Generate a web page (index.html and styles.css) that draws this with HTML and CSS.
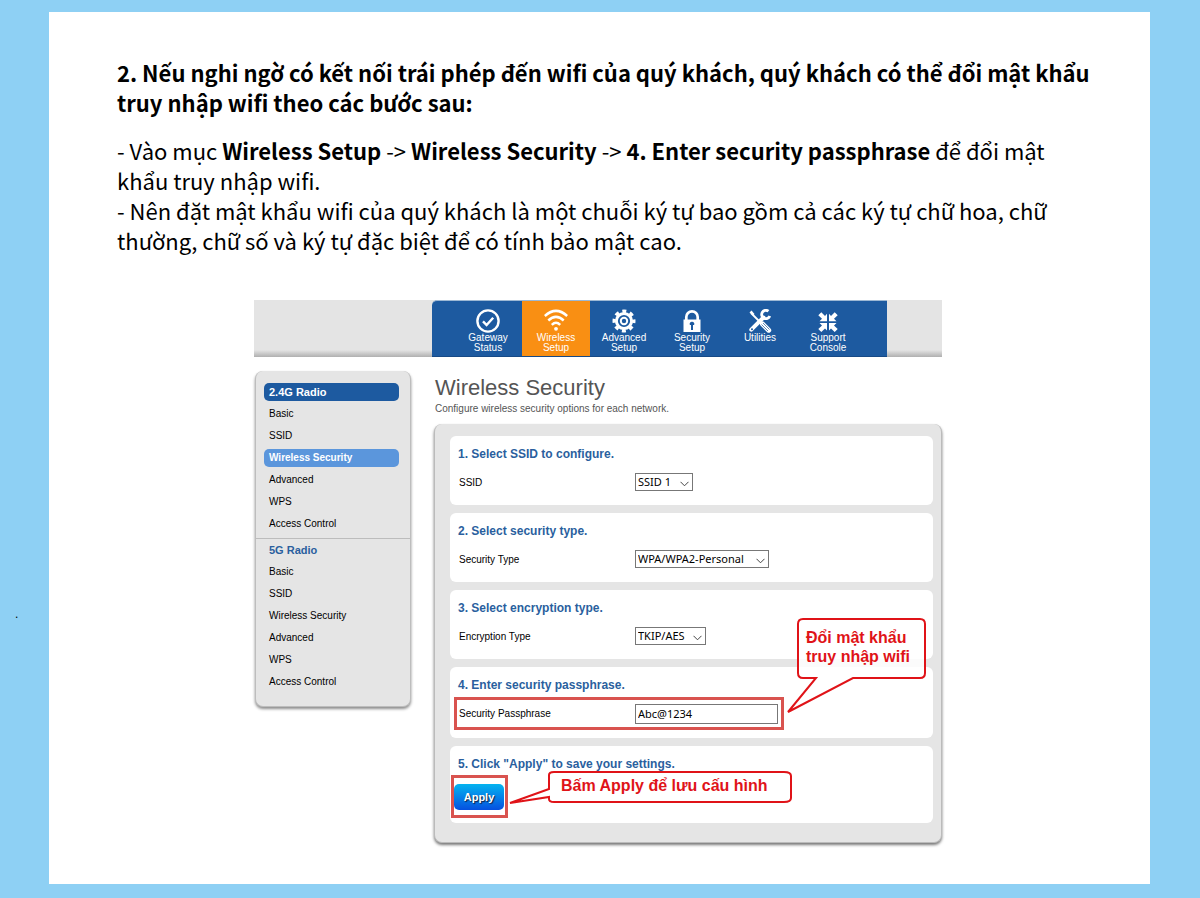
FILE: index.html
```html
<!DOCTYPE html>
<html lang="vi">
<head>
<meta charset="utf-8">
<meta name="viewport" content="width=device-width, initial-scale=1">
<title>Wireless Security</title>
<link rel="stylesheet" href="styles.css">
</head>
<body>
<span class="dot">.</span>
<main class="sheet">
  <section class="intro">
    <h1>2. Nếu nghi ngờ có kết nối trái phép đến wifi của quý khách, quý khách có thể đổi mật khẩu<br>truy nhập wifi theo các bước sau:</h1>
    <p>- Vào mục <b>Wireless Setup</b> -&gt; <b>Wireless Security</b> -&gt; <b>4. Enter security passphrase</b> để đổi mật<br>khẩu truy nhập wifi.</p>
    <p>- Nên đặt mật khẩu wifi của quý khách là một chuỗi ký tự bao gồm cả các ký tự chữ hoa, chữ<br>thường, chữ số và ký tự đặc biệt để có tính bảo mật cao.</p>
  </section>

  <section class="router">
    <header class="topbar">
      <nav class="tabs">
        <a href="#status" class="tab">
          <svg viewBox="0 0 24 24" fill="none" stroke="#fff" stroke-width="2.4"><circle cx="12" cy="12" r="10.6"/><path d="M7 12.3l3.6 3.7 6.6-7.2"/></svg>
          <span>Gateway<br>Status</span></a>
        <a href="#wireless" class="tab tab-active">
          <svg viewBox="0 0 24 24" fill="none" stroke="#fff" stroke-width="2.5"><path d="M.8 7Q12-3.200 23.200 7M4.300 11.500Q12 4.300 19.700 11.500M7.800 15.800Q12 11.800 16.200 15.800"/><circle cx="12" cy="19.800" r="1.900" fill="#fff" stroke="none"/></svg>
          <span>Wireless<br>Setup</span></a>
        <a href="#advanced" class="tab">
          <svg viewBox="0 0 24 24" fill="none" stroke="#fff"><circle cx="12" cy="12" r="7.600" stroke-width="3"/><circle cx="12" cy="12" r="3.200" stroke-width="2"/><circle cx="12" cy="12" r="9.900" stroke-width="3.200" stroke-dasharray="4 3.775" stroke-dashoffset="2"/></svg>
          <span>Advanced<br>Setup</span></a>
        <a href="#security" class="tab">
          <svg viewBox="0 0 24 24"><path d="M6.300 11V8a5.700 5.700 0 0 1 11.400 0v3" fill="none" stroke="#fff" stroke-width="2.700"/><path fill="#fff" fill-rule="evenodd" d="M3.500 10.500h17V23h-17zM12 12.800a2.200 2.200 0 0 0-2.100 3.200h1.100v5h2v-5h1.100A2.200 2.200 0 0 0 12 12.800z"/></svg>
          <span>Security<br>Setup</span></a>
        <a href="#utilities" class="tab">
          <svg viewBox="0 0 24 24" fill="none" stroke="#fff"><path d="M3 4l11 11" stroke-width="1.800"/><path d="M1.500 3.500L3.500 1.500L6.500 5L5 6.500z" fill="#fff" stroke="none"/><path d="M14.500 15l6.200 6.200" stroke-width="5" stroke-linecap="round"/><path d="M15 14l6.500 6.500M13.500 15.500l6.500 6.500" stroke="#1d5aa0" stroke-width=".7"/><path d="M3.300 20.700L15.500 8.500" stroke-width="4" stroke-linecap="round"/><path d="M20.500 2.200A4.200 4.200 0 1 0 21.800 7" stroke-width="2.800"/><circle cx="4" cy="20.200" r="1" fill="#1d5aa0" stroke="none"/></svg>
          <span>Utilities</span></a>
        <a href="#support" class="tab">
          <svg viewBox="0 0 24 24" fill="#fff"><path d="M11 12.300H3.500L6 9.800L2.300 6.200L5.300 3.200L9 6.900L11 4.800z"/><path d="M13 12.300h7.500L18 9.800l3.700-3.600-3-3L15 6.900l-2-2.100zM11 14H3.500L6 16.500l-3.700 3.600 3 3L9 19.400l2 2.100zM13 14h7.500L18 16.500l3.700 3.600-3 3L15 19.400l-2 2.100z"/></svg>
          <span>Support<br>Console</span></a>
      </nav>
    </header>

    <div class="columns">
      <aside class="sidebar">
        <h3 class="current">2.4G Radio</h3>
        <a href="#b24">Basic</a>
        <a href="#s24">SSID</a>
        <a href="#w24" class="selected">Wireless Security</a>
        <a href="#a24">Advanced</a>
        <a href="#p24">WPS</a>
        <a href="#c24">Access Control</a>
        <hr>
        <h3>5G Radio</h3>
        <a href="#b5">Basic</a>
        <a href="#s5">SSID</a>
        <a href="#w5">Wireless Security</a>
        <a href="#a5">Advanced</a>
        <a href="#p5">WPS</a>
        <a href="#c5">Access Control</a>
      </aside>

      <div class="content">
        <h2>Wireless Security</h2>
        <p class="subtitle">Configure wireless security options for each network.</p>

        <form class="panel">
          <section class="card">
            <h4>1. Select SSID to configure.</h4>
            <div class="row"><label for="ssid">SSID</label>
              <span class="select select-s"><select id="ssid"><option>SSID 1</option></select><svg viewBox="0 0 9 6"><path d="M.5.8l4 4 4-4"/></svg></span></div>
          </section>
          <section class="card">
            <h4>2. Select security type.</h4>
            <div class="row"><label for="sec">Security Type</label>
              <span class="select select-l"><select id="sec"><option>WPA/WPA2-Personal</option></select><svg viewBox="0 0 9 6"><path d="M.5.8l4 4 4-4"/></svg></span></div>
          </section>
          <section class="card">
            <h4>3. Select encryption type.</h4>
            <div class="row"><label for="enc">Encryption Type</label>
              <span class="select select-m"><select id="enc"><option>TKIP/AES</option></select><svg viewBox="0 0 9 6"><path d="M.5.8l4 4 4-4"/></svg></span></div>
          </section>
          <section class="card">
            <h4>4. Enter security passphrase.</h4>
            <div class="row marked"><label for="pass">Security Passphrase</label>
              <input id="pass" type="text" value="Abc@1234"></div>
          </section>
          <section class="card card-last">
            <h4>5. Click "Apply" to save your settings.</h4>
            <div class="apply-mark"><button type="button">Apply</button></div>
          </section>

          <div class="callout callout-pass">
            <svg viewBox="0 0 140 97"><path d="M16 2H133Q138 2 138 7V56Q138 61 133 61H66L1 95L29 61H16Q11 61 11 56V7Q11 2 16 2z"/></svg>
            <p>Đổi mật khẩu<br>truy nhập wifi</p>
          </div>
          <div class="callout callout-apply">
            <svg viewBox="0 0 284 34"><path d="M45 2H275Q282 2 282 6V28Q282 32 275 32H45Q40 32 40 29V27L1 33L40 19V5Q40 2 45 2z"/></svg>
            <p>Bấm Apply để lưu cấu hình</p>
          </div>
        </form>
      </div>
    </div>
  </section>
</main>
</body>
</html>
```
FILE: styles.css
```css
* { box-sizing: border-box; }

body {
  margin: 0;
  padding: 12px 50px 14px 49px;
  background: #8ed0f4;
  font-family: "Liberation Sans", Arial, sans-serif;
  font-size: 10px;
  color: #000;
}

h1, h2, h3, h4, p { margin: 0; }
a { color: inherit; text-decoration: none; }

.dot { position: absolute; left: 15px; top: 608px; font-size: 12px; line-height: 12px; }

.sheet { background: #fff; padding: 45px 40px 41px 68px; }

.intro {
  font-family: "Noto Sans CJK SC", "Noto Sans", sans-serif;
  font-size: 22px;
  line-height: 30px;
}
.intro h1 { font-size: inherit; font-weight: 700; margin-bottom: 18px; }

.router { max-width: 688px; margin: 45px 0 0 137px; }

.topbar {
  padding-left: 178px;
  background: linear-gradient(#e4e4e4 0 50px, #b0b0b0 57px);
}
.tabs {
  display: flex;
  width: 455px;
  height: 57px;
  padding-left: 22px;
  background: #1d5aa0;
  border-top: 1px solid #9db8d4;
  border-bottom: 1px solid #174a86;
  border-radius: 5px 0 0 0;
}
.tab {
  flex: 0 0 68px;
  display: flex;
  flex-direction: column;
  align-items: center;
  padding-top: 8px;
  color: #fff;
  line-height: 10px;
  text-align: center;
}
.tab svg { width: 24px; height: 24px; }
.tab-active { background: #f98f13; }

.columns { display: flex; gap: 23px; padding: 14px 0 0 1px; align-items: flex-start; }

.sidebar {
  flex: 0 0 156px;
  display: flex;
  flex-direction: column;
  gap: 4px;
  padding: 12px 0 15px;
  background: #e5e5e5;
  border: solid #bdbdbd;
  border-width: 0 1px 1px;
  border-radius: 8px;
  box-shadow: 0 2px 3px #8c8c8c;
}
.sidebar a, .sidebar h3 {
  margin: 0 11px 0 8px;
  padding-left: 5px;
  line-height: 18px;
  border-radius: 5px;
}
.sidebar h3 { font-size: 11px; color: #2a5f9e; }
.sidebar .current { background: #1d5aa0; color: #fff; }
.sidebar .selected { background: #5b96dc; color: #fff; font-weight: 700; }
.sidebar hr { width: 100%; height: 1px; margin: 1px 0 -2px; border: 0; background: #bcbcbc; }

.content { flex: 1; min-width: 0; }
.content h2 { padding: 4px 0 0 1px; font-size: 22px; line-height: 26px; font-weight: 400; color: #555; }
.subtitle { padding-left: 1px; line-height: 16px; color: #555; }

.panel {
  position: relative;
  display: flex;
  flex-direction: column;
  gap: 8px;
  margin-top: 7px;
  padding: 12px 8px 19px 15px;
  background: #e5e5e5;
  border: solid #bbb;
  border-width: 0 1px 1px;
  border-radius: 8px;
  box-shadow: 0 2px 3px #777;
}
.card { padding: 9px 1px 8px; background: #fff; border-radius: 6px; }
.card h4 { padding-left: 7px; font-size: 12px; line-height: 18px; color: #2a5f9e; }
.row {
  display: grid;
  grid-template-columns: 176px auto;
  justify-content: start;
  align-items: center;
  height: 28px;
  margin: 5px 0 1px 8px;
}
.row.marked {
  width: 330px;
  height: 33px;
  margin: 3px 0 0 3px;
  padding-left: 2px;
  border: 3px solid #d9534f;
}
.card-last { padding-bottom: 5px; }

.select { position: relative; display: block; }
.select select, .row input {
  display: block;
  width: 100%;
  height: 18px;
  margin: 0;
  padding: 0 2px;
  appearance: none;
  background: #fff;
  border: 1px solid #777;
  border-radius: 0;
  font: 11px/16px "Noto Sans", sans-serif;
  color: #000;
}
.row input { width: 143px; height: 20px; }
.select svg {
  position: absolute;
  right: 4px;
  top: 8px;
  width: 9px;
  height: 6px;
  fill: none;
  stroke: #444;
  pointer-events: none;
}
.select-s { width: 58px; }
.select-m { width: 71px; }
.select-l { width: 134px; }

.apply-mark { width: 57px; margin-top: 2px; padding: 6px 0 5px; border: 3px solid #d9534f; }
.apply-mark button {
  display: block;
  width: 50px;
  height: 26px;
  padding: 0;
  border: 0;
  border-radius: 5px;
  background: linear-gradient(#04b4f0, #0550e0);
  color: #fff;
  font: 700 11px "Liberation Sans", sans-serif;
  text-shadow: 1px 1px 1px #124;
}

.callout { position: absolute; color: #e01318; font-size: 16px; line-height: 19px; font-weight: 700; white-space: nowrap; }
.callout svg {
  position: absolute;
  inset: 0;
  width: 100%;
  height: 100%;
  fill: #fff;
  fill-opacity: .85;
  stroke: #e01318;
  stroke-width: 2;
}
.callout p { position: relative; }
.callout-pass { left: 352px; top: 193px; width: 140px; height: 97px; padding: 11px 0 0 19px; }
.callout-apply { left: 74px; top: 346px; width: 284px; height: 34px; padding: 6px 0 0 52px; }
.callout-apply svg { fill-opacity: 1; }
```
